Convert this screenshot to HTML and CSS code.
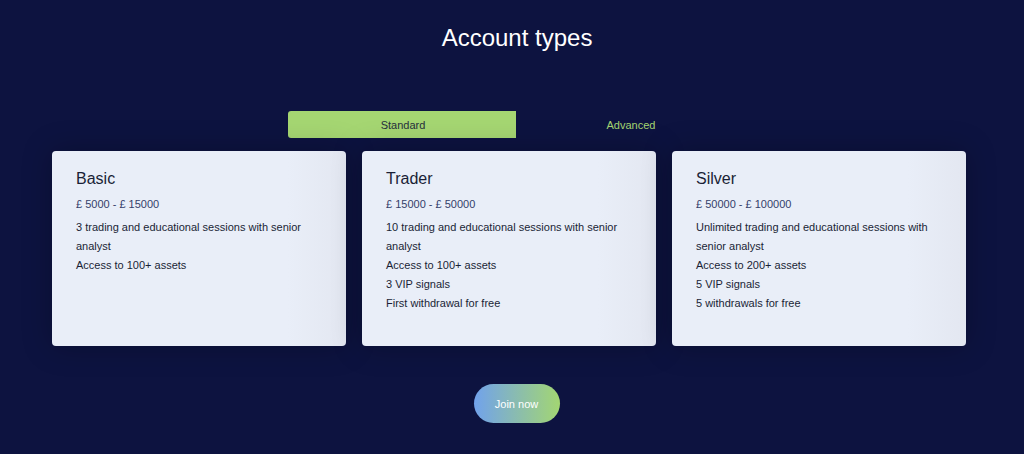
FILE: index.html
```html
<!DOCTYPE html>
<html>
<head>
<meta charset="utf-8">
<link rel="stylesheet" href="styles.css">
</head>
<body>
<section class="page">
  <h1 class="title">Account types</h1>
  <div class="tabs">
    <div class="tab tab-active">Standard</div>
    <div class="tab">Advanced</div>
  </div>
  <div class="cards">
    <div class="card">
      <h2 class="card-title">Basic</h2>
      <div class="price">£ 5000 - £ 15000</div>
      <ul class="features">
        <li>3 trading and educational sessions with senior analyst</li>
        <li>Access to 100+ assets</li>
      </ul>
    </div>
    <div class="card">
      <h2 class="card-title">Trader</h2>
      <div class="price">£ 15000 - £ 50000</div>
      <ul class="features">
        <li>10 trading and educational sessions with senior analyst</li>
        <li>Access to 100+ assets</li>
        <li>3 VIP signals</li>
        <li>First withdrawal for free</li>
      </ul>
    </div>
    <div class="card">
      <h2 class="card-title">Silver</h2>
      <div class="price">£ 50000 - £ 100000</div>
      <ul class="features">
        <li>Unlimited trading and educational sessions with senior analyst</li>
        <li>Access to 200+ assets</li>
        <li>5 VIP signals</li>
        <li>5 withdrawals for free</li>
      </ul>
    </div>
  </div>
  <div class="cta">
    <button class="join">Join now</button>
  </div>
</section>
</body>
</html>
```
FILE: styles.css
```css
html, body {
  margin: 0;
  padding: 0;
  background: #0d1340;
  font-family: "Liberation Sans", Arial, sans-serif;
}
.page {
  width: 1024px;
  height: 454px;
  overflow: hidden;
  padding-top: 24px;
  box-sizing: border-box;
}
.title {
  margin: 0;
  text-align: center;
  color: #ffffff;
  font-weight: 400;
  font-size: 24px;
  line-height: 28px;
  margin-left: 10px;
}
.tabs {
  display: flex;
  width: 456px;
  margin: 59px 0 0 288px;
  height: 27px;
}
.tab {
  flex: 1;
  display: flex;
  align-items: center;
  justify-content: center;
  font-size: 11px;
  color: #a5d672;
  padding-left: 2px;
}
.tab-active {
  background: #a5d672;
  color: #27303d;
  border-radius: 3px 0 0 3px;
}
.cards {
  display: flex;
  gap: 16px;
  margin: 13px 0 0 52px;
}
.card {
  width: 294px;
  height: 195px;
  box-sizing: border-box;
  padding: 18px 24px;
  background: linear-gradient(90deg, #e9eef8 80%, #e3e7f1 100%);
  border-radius: 4px;
  box-shadow: 0 0 30px rgba(0, 0, 0, 0.25);
}
.card-title {
  margin: 0;
  font-weight: 400;
  font-size: 16px;
  line-height: 20px;
  color: #1a1f36;
}
.price {
  margin-top: 8px;
  font-size: 11px;
  line-height: 14px;
  color: #34406a;
}
.features {
  list-style: none;
  margin: 7px 0 0;
  padding: 0;
  font-size: 11px;
  line-height: 19px;
  color: #1a1f36;
}
.cta {
  display: flex;
  justify-content: center;
  margin-top: 38px;
  padding-left: 9px;
}
.join {
  width: 86px;
  height: 39px;
  border: none;
  border-radius: 20px;
  background: linear-gradient(90deg, #71a2ec 0%, #a3d672 100%);
  color: #ffffff;
  font-family: "Liberation Sans", Arial, sans-serif;
  font-size: 11px;
}
```
